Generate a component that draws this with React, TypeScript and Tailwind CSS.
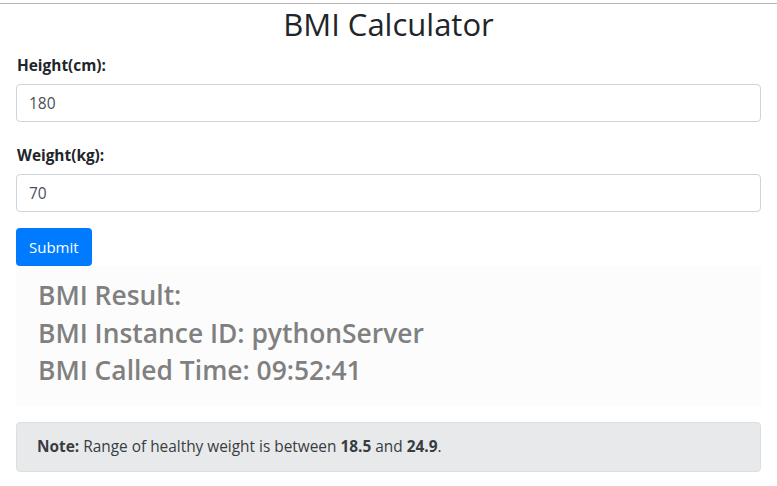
export default function App() {
  return (
    <div className="min-h-screen bg-white" style={{ fontFamily: '"Open Sans", "Noto Sans", sans-serif' }}>
      <div className="pt-[3px]">
        <div className="h-px bg-[#b4b4b4]" />
      </div>
      <h1 className="mt-px text-center text-[31px] font-medium leading-[38px] text-[#212529]">BMI Calculator</h1>
      <form className="px-4 pt-[12px]" onSubmit={(e) => e.preventDefault()}>
        <div className="mb-[23px]">
          <label className="mb-[7px] block pl-px text-[15.4px] font-bold leading-[22px] text-[#212529]">
            Height(cm):
          </label>
          <input
            defaultValue="180"
            className="block h-[38px] w-full rounded-[4px] border border-[#ced4da] px-3 text-[15.5px] text-[#495057] outline-none"
          />
        </div>
        <div className="mb-[16px]">
          <label className="mb-[7px] block pl-px text-[15.4px] font-bold leading-[22px] text-[#212529]">
            Weight(kg):
          </label>
          <input
            defaultValue="70"
            className="block h-[38px] w-full rounded-[4px] border border-[#ced4da] px-3 text-[15.5px] text-[#495057] outline-none"
          />
        </div>
        <button
          type="submit"
          className="h-[38px] rounded-[4px] bg-[#007bff] px-[13px] text-[15px] text-white"
        >
          Submit
        </button>
      </form>
      <div className="mx-4 bg-[#fcfcfc] px-[22px] pb-[16px] pt-[11px] text-[26.4px] font-semibold leading-[37.5px] text-[#808080]">
        <div>BMI Result:</div>
        <div>BMI Instance ID: pythonServer</div>
        <div>BMI Called Time: 09:52:41</div>
      </div>
      <div className="mx-4 mt-[16px] rounded-[4px] border border-[#dcdfe2] bg-[#e8e9ea] px-5 py-[12px] text-[15.4px] leading-[24px] text-[#383d41]">
        <strong>Note:</strong> Range of healthy weight is between <strong>18.5</strong> and{' '}
        <strong>24.9</strong>.
      </div>
    </div>
  );
}
